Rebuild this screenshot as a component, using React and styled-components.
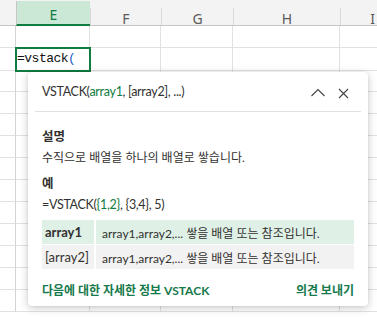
import React from 'react'
import styled, { createGlobalStyle } from 'styled-components'

const GlobalStyle = createGlobalStyle`
    html, body {
        margin: 0;
        padding: 0;
        background: #ffffff;
    }
    body {
        font-family: "Noto Sans", "Noto Sans CJK KR", sans-serif;
        overflow: hidden;
    }
`

const columns = [
    { name: '', width: 16 },
    { name: 'E', width: 74, active: true },
    { name: 'F', width: 71 },
    { name: 'G', width: 72 },
    { name: 'H', width: 107 },
    { name: 'I', width: 64 },
]
const template = columns.map(c => c.width + 'px').join(' ')
const rowCount = 13

const params = [
    { name: 'array1', desc: 'array1,array2,... 쌓을 배열 또는 참조입니다.', current: true },
    { name: '[array2]', desc: 'array1,array2,... 쌓을 배열 또는 참조입니다.' },
]

export default function App() {
    const spreadHeaders = () =>
        columns.map((c, i) => <HeaderCell key={i} active={c.active} first={i == 0}>{c.name}</HeaderCell>)

    const spreadRows = () => {
        const rows = []
        for (let r = 0; r < rowCount; r++) {
            rows.push(
                <Row key={r}>
                    {columns.map((c, i) => (
                        <Cell key={i} first={i == 0} selected={r == 1 && i == 1}>
                            {r == 1 && i == 1 ? <>=vstack<Paren>(</Paren></> : null}
                        </Cell>
                    ))}
                </Row>
            )
        }
        return rows
    }

    return (
        <Sheet>
            <GlobalStyle />
            <HeaderRow>{spreadHeaders()}</HeaderRow>
            {spreadRows()}
            <Tooltip>
                <TipHeader>
                    <Signature>
                        VSTACK(<Green>array1</Green>, [array2], ...)
                    </Signature>
                    <IconButtons>
                        <svg width="16" height="10" viewBox="0 0 16 10">
                            <path d="M1.5 8 L8 1.5 L14.5 8" fill="none" stroke="#444" strokeWidth="1.1" />
                        </svg>
                        <svg width="11" height="11" viewBox="0 0 11 11">
                            <path d="M1 1 L10 10 M10 1 L1 10" fill="none" stroke="#444" strokeWidth="1.1" />
                        </svg>
                    </IconButtons>
                </TipHeader>
                <TipBody>
                    <SectionTitle>설명</SectionTitle>
                    <Text>수직으로 배열을 하나의 배열로 쌓습니다.</Text>
                    <SectionTitle gap>예</SectionTitle>
                    <Formula>=VSTACK(<Green>{'{1,2}'}</Green>, {'{3,4}'}, 5)</Formula>
                    <ParamTable>
                        {params.map(p => (
                            <React.Fragment key={p.name}>
                                <ParamName current={p.current}>{p.name}</ParamName>
                                <ParamDesc current={p.current}>{p.desc}</ParamDesc>
                            </React.Fragment>
                        ))}
                    </ParamTable>
                </TipBody>
                <TipFooter>
                    <Link>다음에 대한 자세한 정보 VSTACK</Link>
                    <Link>의견 보내기</Link>
                </TipFooter>
            </Tooltip>
        </Sheet>
    )
}

const Sheet = styled.div`
    position: relative;
    width: 377px;
    height: 317px;
    overflow: hidden;
    background: #ffffff;
`
const HeaderRow = styled.div`
    display: grid;
    grid-template-columns: ${template};
    height: 26px;
    background: #f3f3f3;
    border-bottom: 1px solid #c6c6c6;
    box-sizing: border-box;
`
const HeaderCell = styled.div`
    display: flex;
    align-items: center;
    justify-content: center;
    padding-top: 4px;
    box-sizing: border-box;
    font-size: 14px;
    color: ${p => (p.active ? '#107c41' : '#5a5a5a')};
    background: ${p => (p.active ? '#cbe8d6' : 'transparent')};
    border-left: ${p => (p.first ? 'none' : '1px solid #dadada')};
    border-bottom: ${p => (p.active ? '2px solid #107c41' : 'none')};
    margin-bottom: ${p => (p.active ? '-1px' : '0')};
    height: ${p => (p.first ? '100%' : '70%')};
    align-self: end;
    ${p => p.active && 'height: 100%; border-left-color: #c6c6c6; padding-top: 3px;'}
`
const Row = styled.div`
    display: grid;
    grid-template-columns: ${template};
    height: 22px;
`
const Cell = styled.div`
    position: relative;
    box-sizing: border-box;
    border-right: 1px solid #e1e1e1;
    border-bottom: 1px solid #e1e1e1;
    ${p => p.first && 'border-right: 1px solid #d4d4d4;'}
    ${p => p.selected && `
        outline: 2px solid #107c41;
        outline-offset: -1px;
        z-index: 1;
        font-family: "Liberation Mono", monospace;
        font-size: 13px;
        line-height: 22px;
        padding-left: 1px;
        letter-spacing: -0.5px;
        color: #111;
        white-space: nowrap;
    `}
`
const Paren = styled.span`
    color: #2062c4;
`
const Tooltip = styled.div`
    position: absolute;
    left: 28px;
    top: 72px;
    width: 340px;
    height: 234px;
    background: #ffffff;
    border-radius: 4px;
    box-shadow: 0 2px 8px rgba(0, 0, 0, 0.22), 0 0 2px rgba(0, 0, 0, 0.08);
    z-index: 2;
    display: flex;
    flex-direction: column;
    color: #323130;
    font-family: Lato, "Noto Sans CJK KR", sans-serif;
`
const TipHeader = styled.div`
    display: flex;
    align-items: center;
    justify-content: space-between;
    height: 40px;
    margin: 0 7px;
    padding: 0 12px 0 7px;
    border-bottom: 1px solid #e1e1e1;
    box-sizing: border-box;
`
const Signature = styled.div`
    font-size: 12.5px;
    letter-spacing: -0.3px;
    padding-top: 0;
`
const Green = styled.span`
    color: #107c41;
`
const IconButtons = styled.div`
    display: flex;
    align-items: center;
    gap: 12px;
    padding-top: 3px;
`
const TipBody = styled.div`
    padding: 15px 14px 0 14px;
    display: flex;
    flex-direction: column;
`
const SectionTitle = styled.div`
    font-size: 12.5px;
    font-weight: 700;
    line-height: 20px;
    margin-top: ${p => (p.gap ? '6px' : '0')};
`
const Text = styled.div`
    font-size: 12px;
    line-height: 20px;
    margin-top: 1px;
`
const Formula = styled.div`
    font-size: 12.5px;
    letter-spacing: -0.3px;
    line-height: 20px;
    margin-top: 1px;
`
const ParamTable = styled.div`
    display: grid;
    grid-template-columns: 52px 1fr;
    grid-auto-rows: 24px;
    gap: 1px 2px;
    margin-top: 5px;
    font-size: 12px;
`
const ParamName = styled.div`
    display: flex;
    align-items: center;
    padding-left: 3px;
    font-size: 13px;
    font-weight: ${p => (p.current ? 700 : 400)};
    background: ${p => (p.current ? '#dff0e6' : '#f2f2f2')};
`
const ParamDesc = styled.div`
    display: flex;
    align-items: center;
    padding-left: 6px;
    white-space: nowrap;
    background: ${p => (p.current ? '#dff0e6' : '#f2f2f2')};
`
const TipFooter = styled.div`
    display: flex;
    justify-content: space-between;
    align-items: center;
    padding: 0 14px;
    margin-top: 10px;
    height: 20px;
`
const Link = styled.span`
    font-size: 12px;
    font-weight: 700;
    color: #16794a;
    cursor: pointer;
`
